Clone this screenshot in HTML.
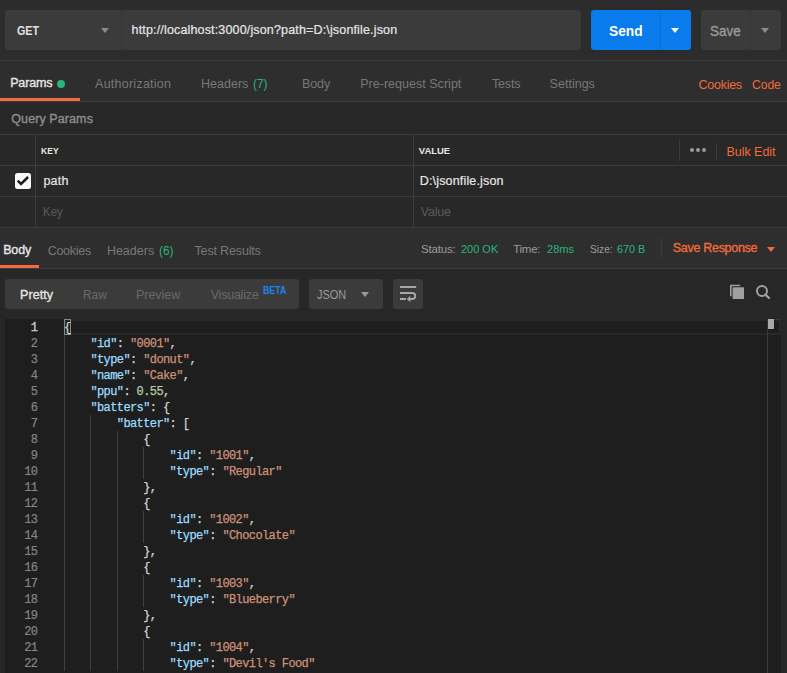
<!DOCTYPE html>
<html><head><meta charset="utf-8">
<style>
html,body{margin:0;padding:0}
body{width:787px;height:673px;overflow:hidden;position:relative;background:#2c2c2c;font-family:"Liberation Sans",sans-serif}
.r{position:absolute}
.t{position:absolute;height:20px;line-height:20px;white-space:pre}
.ln{position:absolute;left:5px;width:32.4px;text-align:right;height:16px;line-height:16px;font-family:"Liberation Mono",monospace;font-size:12px;letter-spacing:-0.6px;color:#858585;-webkit-text-stroke:0.2px currentColor}
.ln.act{color:#c6c6c6;-webkit-text-stroke:0.4px currentColor}
.ig{position:absolute;width:1px;height:16px;background:#404040}
.cl{position:absolute;height:16px;line-height:16px;font-family:"Liberation Mono",monospace;font-size:12px;letter-spacing:-0.6px;white-space:pre;color:#d4d4d4;-webkit-text-stroke:0.25px currentColor}
.k{color:#9cdcfe}.s{color:#ce9178}.n{color:#b5cea8}.p{color:#d4d4d4}
.tri{position:absolute;width:0;height:0;border-left:4px solid transparent;border-right:4px solid transparent;border-top:5px solid #9a9a9a}
</style></head><body>
<!-- top bar -->
<div class="r" style="left:0;top:0;width:787px;height:60px;background:#2c2c2c"></div>
<div class="r" style="left:5px;top:10px;width:576px;height:40px;background:#3b3b3b;border-radius:3px"></div>
<div class="r" style="left:121px;top:10px;width:1px;height:40px;background:#353535"></div>
<div class="tri" style="left:101px;top:28px;border-top-color:#8c8c8c"></div>
<div class="r" style="left:591px;top:10px;width:100px;height:40px;background:#097bed;border-radius:3px"></div>
<div class="r" style="left:660px;top:10px;width:1px;height:40px;background:#0a6ed6"></div>
<div class="tri" style="left:671px;top:28px;border-top-color:#ffffff"></div>
<div class="r" style="left:701px;top:10px;width:80px;height:40px;background:#3b3b3b;border-radius:3px"></div>
<div class="r" style="left:750px;top:10px;width:1px;height:40px;background:#353535"></div>
<div class="tri" style="left:761px;top:28px;border-top-color:#8c8c8c"></div>
<!-- request tabs -->
<div class="r" style="left:0;top:60px;width:787px;height:1px;background:#3c3c3c"></div>
<div class="r" style="left:0;top:61px;width:787px;height:40px;background:#2e2e2e"></div>
<div class="r" style="left:57px;top:80px;width:8px;height:8px;border-radius:50%;background:#2ab57d"></div>
<div class="r" style="left:0;top:98px;width:80px;height:3px;background:#f26b3a"></div>
<div class="r" style="left:0;top:101px;width:787px;height:1px;background:#3c3c3c"></div>
<!-- query params + table -->
<div class="r" style="left:0;top:102px;width:787px;height:125px;background:#282828"></div>
<div class="r" style="left:0;top:134px;width:787px;height:1px;background:#3c3c3c"></div>
<div class="r" style="left:0;top:165px;width:787px;height:1px;background:#3c3c3c"></div>
<div class="r" style="left:0;top:196px;width:787px;height:1px;background:#3c3c3c"></div>
<div class="r" style="left:0;top:227px;width:787px;height:1px;background:#3c3c3c"></div>
<div class="r" style="left:35px;top:135px;width:1px;height:92px;background:#3c3c3c"></div>
<div class="r" style="left:413px;top:135px;width:1px;height:92px;background:#3c3c3c"></div>
<div class="r" style="left:679px;top:140px;width:1px;height:21px;background:#3c3c3c"></div>
<div class="r" style="left:716px;top:143px;width:1px;height:17px;background:#3c3c3c"></div>
<div class="r" style="left:690px;top:148px;width:4px;height:4px;border-radius:50%;background:#9a9a9a"></div>
<div class="r" style="left:696px;top:148px;width:4px;height:4px;border-radius:50%;background:#9a9a9a"></div>
<div class="r" style="left:702px;top:148px;width:4px;height:4px;border-radius:50%;background:#9a9a9a"></div>
<div class="r" style="left:15px;top:173px;width:16px;height:16px;border-radius:2.5px;background:#fafafa"></div>
<svg class="r" style="left:15px;top:173px" width="16" height="16" viewBox="0 0 16 16"><path d="M2.7 7.7 L6 10.9 L13.1 4" fill="none" stroke="#1e1e1e" stroke-width="2.5"/></svg>
<!-- response tabs -->
<div class="r" style="left:0;top:228px;width:787px;height:40px;background:#2e2e2e"></div>
<div class="r" style="left:0;top:265px;width:39px;height:3px;background:#f26b3a"></div>
<div class="r" style="left:661px;top:238px;width:1px;height:20px;background:#3c3c3c"></div>
<div class="tri" style="left:767px;top:247px;border-top-color:#f26b3a"></div>
<div class="r" style="left:0;top:268px;width:787px;height:1px;background:#3c3c3c"></div>
<!-- toolbar -->
<div class="r" style="left:0;top:269px;width:787px;height:404px;background:#272727"></div>
<div class="r" style="left:5px;top:279px;width:294px;height:30px;background:#3b3b3b;border-radius:3px"></div>
<div class="r" style="left:309px;top:279px;width:74px;height:30px;background:#3b3b3b;border-radius:3px"></div>
<div class="tri" style="left:361px;top:292px;border-top-color:#9a9a9a"></div>
<div class="r" style="left:393px;top:279px;width:30px;height:30px;background:#3b3b3b;border-radius:3px"></div>
<svg class="r" style="left:393px;top:279px" width="30" height="30" viewBox="0 0 30 30">
<path d="M7 8 H23.2 M7 14 H19.2 A3 3 0 0 1 19.2 20 H16.5 M7 20 H13" fill="none" stroke="#a6a6a6" stroke-width="2"/>
<path d="M17.4 16.8 L13.8 20 L17.4 23.2 Z" fill="#a6a6a6"/>
</svg>
<svg class="r" style="left:726px;top:282px" width="22" height="20" viewBox="0 0 22 20">
<path d="M5 14.2 V3.8 H14.2" fill="none" stroke="#a0a0a0" stroke-width="2"/>
<rect x="5.6" y="4.3" width="13.4" height="13.7" fill="#272727"/>
<rect x="6.6" y="5.3" width="11.4" height="11.7" fill="#a0a0a0"/>
</svg>
<svg class="r" style="left:752px;top:282px" width="22" height="20" viewBox="0 0 22 20">
<circle cx="10" cy="9" r="5" fill="none" stroke="#a0a0a0" stroke-width="2"/>
<path d="M13.6 12.6 L17 16" stroke="#a0a0a0" stroke-width="2.2" stroke-linecap="round"/>
</svg>
<!-- editor -->
<div class="r" style="left:5px;top:319px;width:776px;height:354px;background:#1e1e1e"></div>
<div class="r" style="left:64px;top:319px;width:717px;height:16px;box-sizing:border-box;border:2px solid #282828"></div>
<div class="r" style="left:774px;top:319px;width:7px;height:1px;background:#383838"></div>
<div class="r" style="left:64px;top:319px;width:7px;height:16px;box-sizing:border-box;border:1px solid #888888;background:rgba(0,100,0,0.1)"></div>
<div class="r" style="left:767px;top:319px;width:1px;height:354px;background:#3a3a3a"></div>
<div class="r" style="left:768px;top:319px;width:6px;height:10px;background:#aaaaaa;box-shadow:0 0 1px #000"></div>
<div class="ln act" style="top:320px">1</div>
<div class="ln" style="top:336px">2</div>
<div class="ln" style="top:352px">3</div>
<div class="ln" style="top:368px">4</div>
<div class="ln" style="top:384px">5</div>
<div class="ln" style="top:400px">6</div>
<div class="ln" style="top:416px">7</div>
<div class="ln" style="top:432px">8</div>
<div class="ln" style="top:448px">9</div>
<div class="ln" style="top:464px">10</div>
<div class="ln" style="top:480px">11</div>
<div class="ln" style="top:496px">12</div>
<div class="ln" style="top:512px">13</div>
<div class="ln" style="top:528px">14</div>
<div class="ln" style="top:544px">15</div>
<div class="ln" style="top:560px">16</div>
<div class="ln" style="top:576px">17</div>
<div class="ln" style="top:592px">18</div>
<div class="ln" style="top:608px">19</div>
<div class="ln" style="top:624px">20</div>
<div class="ln" style="top:640px">21</div>
<div class="ln" style="top:656px">22</div>
<div class="ig" style="left:64px;top:335px"></div>
<div class="ig" style="left:64px;top:351px"></div>
<div class="ig" style="left:64px;top:367px"></div>
<div class="ig" style="left:64px;top:383px"></div>
<div class="ig" style="left:64px;top:399px"></div>
<div class="ig" style="left:64px;top:415px"></div>
<div class="ig" style="left:90px;top:415px"></div>
<div class="ig" style="left:64px;top:431px"></div>
<div class="ig" style="left:90px;top:431px"></div>
<div class="ig" style="left:117px;top:431px"></div>
<div class="ig" style="left:64px;top:447px"></div>
<div class="ig" style="left:90px;top:447px"></div>
<div class="ig" style="left:117px;top:447px"></div>
<div class="ig" style="left:143px;top:447px"></div>
<div class="ig" style="left:64px;top:463px"></div>
<div class="ig" style="left:90px;top:463px"></div>
<div class="ig" style="left:117px;top:463px"></div>
<div class="ig" style="left:143px;top:463px"></div>
<div class="ig" style="left:64px;top:479px"></div>
<div class="ig" style="left:90px;top:479px"></div>
<div class="ig" style="left:117px;top:479px"></div>
<div class="ig" style="left:64px;top:495px"></div>
<div class="ig" style="left:90px;top:495px"></div>
<div class="ig" style="left:117px;top:495px"></div>
<div class="ig" style="left:64px;top:511px"></div>
<div class="ig" style="left:90px;top:511px"></div>
<div class="ig" style="left:117px;top:511px"></div>
<div class="ig" style="left:143px;top:511px"></div>
<div class="ig" style="left:64px;top:527px"></div>
<div class="ig" style="left:90px;top:527px"></div>
<div class="ig" style="left:117px;top:527px"></div>
<div class="ig" style="left:143px;top:527px"></div>
<div class="ig" style="left:64px;top:543px"></div>
<div class="ig" style="left:90px;top:543px"></div>
<div class="ig" style="left:117px;top:543px"></div>
<div class="ig" style="left:64px;top:559px"></div>
<div class="ig" style="left:90px;top:559px"></div>
<div class="ig" style="left:117px;top:559px"></div>
<div class="ig" style="left:64px;top:575px"></div>
<div class="ig" style="left:90px;top:575px"></div>
<div class="ig" style="left:117px;top:575px"></div>
<div class="ig" style="left:143px;top:575px"></div>
<div class="ig" style="left:64px;top:591px"></div>
<div class="ig" style="left:90px;top:591px"></div>
<div class="ig" style="left:117px;top:591px"></div>
<div class="ig" style="left:143px;top:591px"></div>
<div class="ig" style="left:64px;top:607px"></div>
<div class="ig" style="left:90px;top:607px"></div>
<div class="ig" style="left:117px;top:607px"></div>
<div class="ig" style="left:64px;top:623px"></div>
<div class="ig" style="left:90px;top:623px"></div>
<div class="ig" style="left:117px;top:623px"></div>
<div class="ig" style="left:64px;top:639px"></div>
<div class="ig" style="left:90px;top:639px"></div>
<div class="ig" style="left:117px;top:639px"></div>
<div class="ig" style="left:143px;top:639px"></div>
<div class="ig" style="left:64px;top:655px"></div>
<div class="ig" style="left:90px;top:655px"></div>
<div class="ig" style="left:117px;top:655px"></div>
<div class="ig" style="left:143px;top:655px"></div>
<div class="cl" style="top:320px;left:64.0px"><span class="p">{</span></div>
<div class="cl" style="top:336px;left:90.4px"><span class="k">&quot;id&quot;</span><span class="p">: </span><span class="s">&quot;0001&quot;</span><span class="p">,</span></div>
<div class="cl" style="top:352px;left:90.4px"><span class="k">&quot;type&quot;</span><span class="p">: </span><span class="s">&quot;donut&quot;</span><span class="p">,</span></div>
<div class="cl" style="top:368px;left:90.4px"><span class="k">&quot;name&quot;</span><span class="p">: </span><span class="s">&quot;Cake&quot;</span><span class="p">,</span></div>
<div class="cl" style="top:384px;left:90.4px"><span class="k">&quot;ppu&quot;</span><span class="p">: </span><span class="n">0.55</span><span class="p">,</span></div>
<div class="cl" style="top:400px;left:90.4px"><span class="k">&quot;batters&quot;</span><span class="p">: {</span></div>
<div class="cl" style="top:416px;left:116.8px"><span class="k">&quot;batter&quot;</span><span class="p">: [</span></div>
<div class="cl" style="top:432px;left:143.2px"><span class="p">{</span></div>
<div class="cl" style="top:448px;left:169.6px"><span class="k">&quot;id&quot;</span><span class="p">: </span><span class="s">&quot;1001&quot;</span><span class="p">,</span></div>
<div class="cl" style="top:464px;left:169.6px"><span class="k">&quot;type&quot;</span><span class="p">: </span><span class="s">&quot;Regular&quot;</span></div>
<div class="cl" style="top:480px;left:143.2px"><span class="p">},</span></div>
<div class="cl" style="top:496px;left:143.2px"><span class="p">{</span></div>
<div class="cl" style="top:512px;left:169.6px"><span class="k">&quot;id&quot;</span><span class="p">: </span><span class="s">&quot;1002&quot;</span><span class="p">,</span></div>
<div class="cl" style="top:528px;left:169.6px"><span class="k">&quot;type&quot;</span><span class="p">: </span><span class="s">&quot;Chocolate&quot;</span></div>
<div class="cl" style="top:544px;left:143.2px"><span class="p">},</span></div>
<div class="cl" style="top:560px;left:143.2px"><span class="p">{</span></div>
<div class="cl" style="top:576px;left:169.6px"><span class="k">&quot;id&quot;</span><span class="p">: </span><span class="s">&quot;1003&quot;</span><span class="p">,</span></div>
<div class="cl" style="top:592px;left:169.6px"><span class="k">&quot;type&quot;</span><span class="p">: </span><span class="s">&quot;Blueberry&quot;</span></div>
<div class="cl" style="top:608px;left:143.2px"><span class="p">},</span></div>
<div class="cl" style="top:624px;left:143.2px"><span class="p">{</span></div>
<div class="cl" style="top:640px;left:169.6px"><span class="k">&quot;id&quot;</span><span class="p">: </span><span class="s">&quot;1004&quot;</span><span class="p">,</span></div>
<div class="cl" style="top:656px;left:169.6px"><span class="k">&quot;type&quot;</span><span class="p">: </span><span class="s">&quot;Devil&#x27;s Food&quot;</span></div>
<div class="t" style="left:17.00px;top:20.50px;font-size:13px;font-weight:bold;color:#e0e0e0;transform:scaleX(0.8259);transform-origin:0 0;">GET</div>
<div class="t" style="left:131.60px;top:19.87px;font-size:12.5px;font-weight:normal;color:#e6e6e6;letter-spacing:0.157px;-webkit-text-stroke:0.2px currentColor;">http://localhost:3000/json?path=D:\jsonfile.json</div>
<div class="t" style="left:608.80px;top:20.98px;font-size:14.5px;font-weight:bold;color:#ffffff;transform:scaleX(0.9486);transform-origin:0 0;">Send</div>
<div class="t" style="left:710.00px;top:21.28px;font-size:14.5px;font-weight:normal;-webkit-text-stroke:0.35px currentColor;color:#9a9a9a;transform:scaleX(0.9273);transform-origin:0 0;">Save</div>
<div class="t" style="left:10.20px;top:73.27px;font-size:12.5px;font-weight:normal;-webkit-text-stroke:0.35px currentColor;color:#e6e6e6;letter-spacing:-0.160px;">Params</div>
<div class="t" style="left:95.10px;top:73.87px;font-size:12.5px;font-weight:normal;color:#787878;letter-spacing:0.242px;">Authorization</div>
<div class="t" style="left:200.90px;top:73.87px;font-size:12.5px;font-weight:normal;color:#787878;letter-spacing:0.033px;">Headers</div>
<div class="t" style="left:253.00px;top:73.87px;font-size:12.5px;font-weight:normal;color:#2ab57d;transform:scaleX(0.9533);transform-origin:0 0;">(7)</div>
<div class="t" style="left:302.00px;top:73.87px;font-size:12.5px;font-weight:normal;color:#787878;letter-spacing:-0.100px;">Body</div>
<div class="t" style="left:360.20px;top:73.87px;font-size:12.5px;font-weight:normal;color:#787878;letter-spacing:0.024px;">Pre-request Script</div>
<div class="t" style="left:491.90px;top:73.87px;font-size:12.5px;font-weight:normal;color:#787878;letter-spacing:-0.125px;">Tests</div>
<div class="t" style="left:549.60px;top:73.87px;font-size:12.5px;font-weight:normal;color:#787878;letter-spacing:0.014px;">Settings</div>
<div class="t" style="left:698.60px;top:74.87px;font-size:12.5px;font-weight:normal;color:#f26b3a;letter-spacing:-0.283px;">Cookies</div>
<div class="t" style="left:752.00px;top:74.87px;font-size:12.5px;font-weight:normal;color:#f26b3a;transform:scaleX(0.9633);transform-origin:0 0;">Code</div>
<div class="t" style="left:11.30px;top:108.67px;font-size:12.5px;font-weight:normal;-webkit-text-stroke:0.35px currentColor;color:#8e8e8e;letter-spacing:0.091px;">Query Params</div>
<div class="t" style="left:41.00px;top:140.71px;font-size:9.5px;font-weight:bold;color:#e6e6e6;transform:scaleX(0.9000);transform-origin:0 0;">KEY</div>
<div class="t" style="left:418.80px;top:140.71px;font-size:9.5px;font-weight:bold;color:#e6e6e6;letter-spacing:-0.050px;">VALUE</div>
<div class="t" style="left:726.50px;top:141.77px;font-size:12.5px;font-weight:normal;color:#f26b3a;letter-spacing:-0.037px;">Bulk Edit</div>
<div class="t" style="left:43.40px;top:170.87px;font-size:12.5px;font-weight:normal;color:#e6e6e6;letter-spacing:0.233px;-webkit-text-stroke:0.2px currentColor;">path</div>
<div class="t" style="left:419.70px;top:171.17px;font-size:12.5px;font-weight:normal;color:#e6e6e6;letter-spacing:0.173px;-webkit-text-stroke:0.2px currentColor;">D:\jsonfile.json</div>
<div class="t" style="left:42.58px;top:201.87px;font-size:12.5px;font-weight:normal;color:#5a5a5a;transform:scaleX(0.9190);transform-origin:0 0;">Key</div>
<div class="t" style="left:420.70px;top:201.87px;font-size:12.5px;font-weight:normal;color:#5a5a5a;letter-spacing:-0.175px;">Value</div>
<div class="t" style="left:3.20px;top:240.07px;font-size:12.5px;font-weight:normal;-webkit-text-stroke:0.35px currentColor;color:#e6e6e6;letter-spacing:-0.167px;">Body</div>
<div class="t" style="left:47.70px;top:240.57px;font-size:12.5px;font-weight:normal;color:#787878;letter-spacing:-0.283px;">Cookies</div>
<div class="t" style="left:106.90px;top:240.57px;font-size:12.5px;font-weight:normal;color:#787878;letter-spacing:0.000px;">Headers</div>
<div class="t" style="left:159.20px;top:240.57px;font-size:12.5px;font-weight:normal;color:#2ab57d;transform:scaleX(0.9467);transform-origin:0 0;">(6)</div>
<div class="t" style="left:194.50px;top:240.57px;font-size:12.5px;font-weight:normal;color:#787878;letter-spacing:-0.155px;">Test Results</div>
<div class="t" style="left:421.00px;top:238.92px;font-size:11.5px;font-weight:normal;color:#9a9a9a;letter-spacing:-0.167px;">Status:</div>
<div class="t" style="left:460.80px;top:238.92px;font-size:11.5px;font-weight:normal;color:#2ab57d;transform:scaleX(0.9538);transform-origin:0 0;">200 OK</div>
<div class="t" style="left:513.20px;top:238.92px;font-size:11.5px;font-weight:normal;color:#9a9a9a;letter-spacing:-0.250px;">Time:</div>
<div class="t" style="left:546.60px;top:238.92px;font-size:11.5px;font-weight:normal;color:#2ab57d;transform:scaleX(0.9643);transform-origin:0 0;">28ms</div>
<div class="t" style="left:589.50px;top:238.92px;font-size:11.5px;font-weight:normal;color:#9a9a9a;transform:scaleX(0.8880);transform-origin:0 0;">Size:</div>
<div class="t" style="left:617.40px;top:238.92px;font-size:11.5px;font-weight:normal;color:#2ab57d;transform:scaleX(0.9433);transform-origin:0 0;">670 B</div>
<div class="t" style="left:672.70px;top:237.67px;font-size:12.5px;font-weight:normal;-webkit-text-stroke:0.35px currentColor;color:#f26b3a;letter-spacing:-0.283px;">Save Response</div>
<div class="t" style="left:20.00px;top:284.57px;font-size:12.5px;font-weight:normal;-webkit-text-stroke:0.35px currentColor;color:#e6e6e6;letter-spacing:0.080px;">Pretty</div>
<div class="t" style="left:82.95px;top:285.07px;font-size:12.5px;font-weight:normal;color:#6a6a6a;transform:scaleX(0.9500);transform-origin:0 0;">Raw</div>
<div class="t" style="left:136.00px;top:285.07px;font-size:12.5px;font-weight:normal;color:#6a6a6a;letter-spacing:-0.050px;">Preview</div>
<div class="t" style="left:210.70px;top:285.07px;font-size:12.5px;font-weight:normal;color:#6a6a6a;letter-spacing:-0.225px;">Visualize</div>
<div class="t" style="left:262.60px;top:280.54px;font-size:10px;font-weight:bold;color:#1b84ee;transform:scaleX(0.8815);transform-origin:0 0;">BETA</div>
<div class="t" style="left:317.30px;top:285.37px;font-size:12.5px;font-weight:normal;color:#9a9a9a;transform:scaleX(0.8788);transform-origin:0 0;">JSON</div>
</body></html>
